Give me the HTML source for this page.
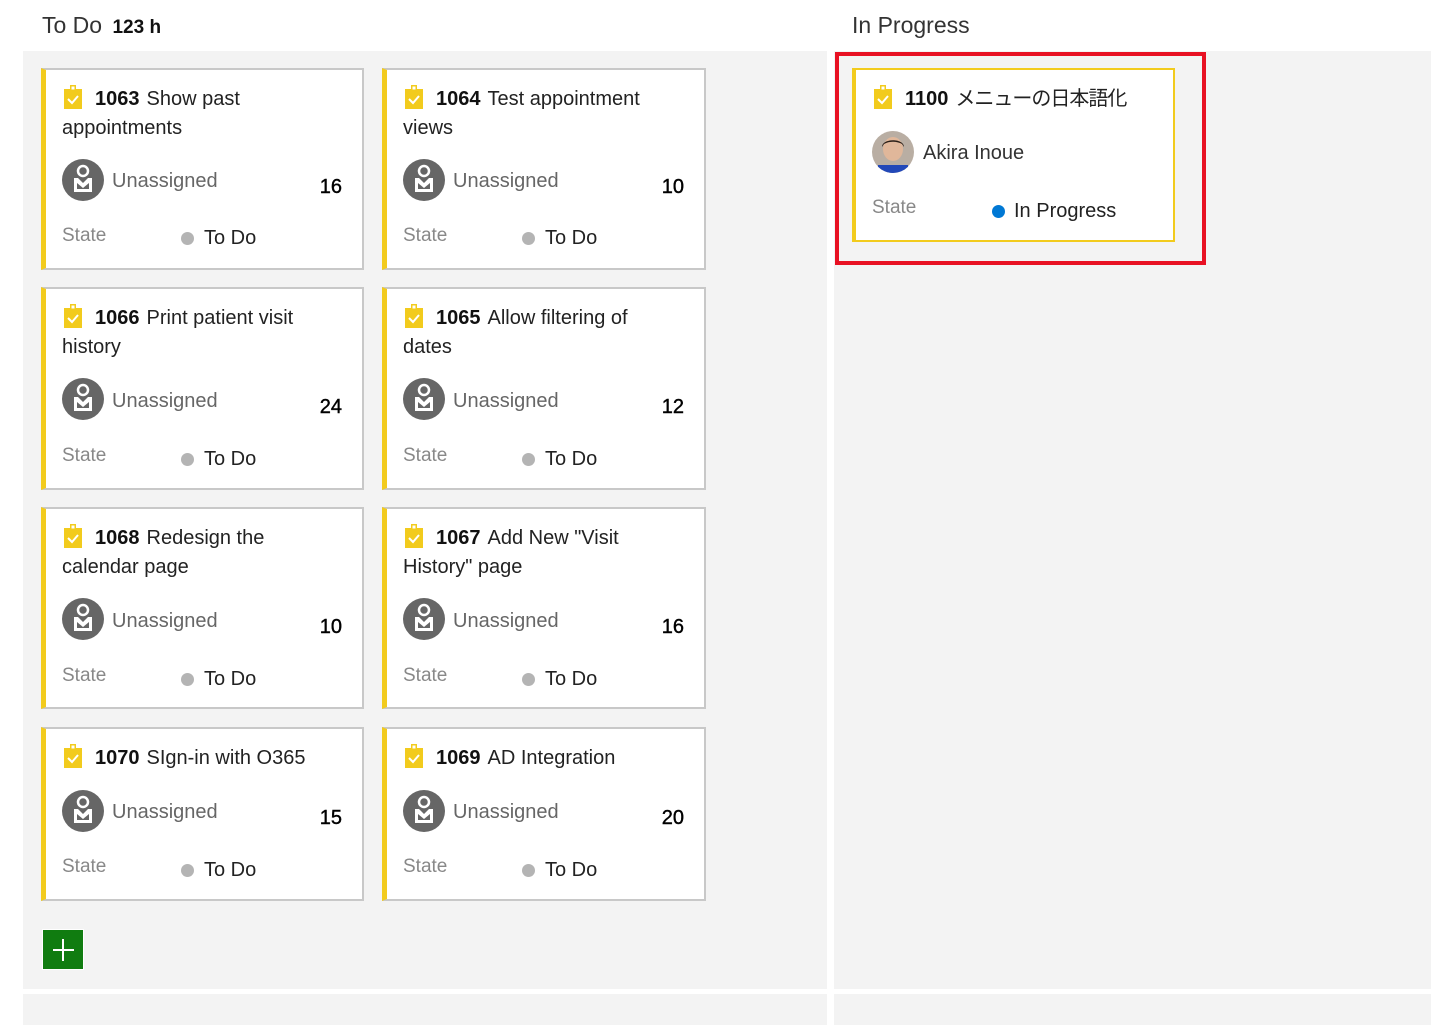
<!DOCTYPE html>
<html><head><meta charset="utf-8"><style>
body{margin:0;width:1431px;height:1025px;background:#fff;position:relative;overflow:hidden;font-family:"Segoe UI","Liberation Sans","Noto Sans CJK JP",sans-serif;}
.abs{position:absolute}
.col{position:absolute;background:#f3f3f3}
.card{position:absolute;background:#fff;border:2px solid #c8c8c8;border-left:5px solid #f2cb1d;box-sizing:border-box}
.t{position:absolute;left:16px;font-size:20px;color:#222;line-height:30px;white-space:nowrap}
.t b{font-weight:bold;margin-right:7px;color:#111}
.ic{position:absolute;left:18px;width:18px;height:24px}
.av{position:absolute;left:16px;width:42px;height:42px}
.un{position:absolute;left:66px;font-size:20px;color:#666;line-height:30px}
.num{position:absolute;right:20px;font-size:20px;color:#000;line-height:30px;-webkit-text-stroke:0.4px #000}
.st{position:absolute;left:16px;font-size:19px;color:#888;line-height:30px}
.dot{position:absolute;left:135px;width:13px;height:13px;border-radius:50%;background:#b4b4b4}
.sv{position:absolute;left:158px;font-size:20px;color:#222;line-height:30px}
</style></head><body>
<div class="abs" style="left:42px;top:8px;font-size:23px;color:#333;line-height:34px">To Do <b style="font-size:19px;color:#111;margin-left:4px">123 h</b></div>
<div class="abs" style="left:852px;top:8px;font-size:23px;color:#333;line-height:34px">In Progress</div>
<div class="col" style="left:23px;top:51px;width:804px;height:938px"></div>
<div class="col" style="left:834px;top:51px;width:597px;height:938px"></div>
<div class="col" style="left:23px;top:994px;width:804px;height:31px"></div>
<div class="col" style="left:834px;top:994px;width:597px;height:31px"></div>

<svg width="0" height="0" style="position:absolute">
<defs>
<symbol id="clip" viewBox="0 0 18 24"><rect x="0" y="4" width="18" height="20" fill="#f2cb1d"/><rect x="6" y="0" width="6" height="6" fill="#f2cb1d"/><rect x="7.5" y="1.5" width="3" height="3" fill="#fff"/><path d="M4 14l4 4 6-7" stroke="#fff" stroke-width="2" fill="none"/></symbol>
<symbol id="user" viewBox="0 0 42 42"><circle cx="21" cy="21" r="21" fill="#666"/><circle cx="21" cy="12" r="5" fill="none" stroke="#fff" stroke-width="2.5"/><path d="M12 19v14h18V19h-4l-5 5-5-5z" fill="#fff"/><path d="M15 24v6h12v-6l-6 5z" fill="#666"/></symbol>
</defs></svg>

<div class="card" style="left:41px;top:68px;width:323px;height:202px">
<svg class="ic" style="top:15px"><use href="#clip"/></svg>
<div class="t" style="top:14px"><span style="margin-left:33px"></span><b>1063</b>Show past</div>
<div class="t" style="top:43px">appointments</div>
<svg class="av" style="top:89px"><use href="#user"/></svg>
<div class="un" style="top:96px">Unassigned</div><div class="num" style="top:102px">16</div>
<div class="st" style="top:151px">State</div><div class="dot" style="top:162px"></div><div class="sv" style="top:153px">To Do</div>
</div>
<div class="card" style="left:382px;top:68px;width:324px;height:202px">
<svg class="ic" style="top:15px"><use href="#clip"/></svg>
<div class="t" style="top:14px"><span style="margin-left:33px"></span><b>1064</b>Test appointment</div>
<div class="t" style="top:43px">views</div>
<svg class="av" style="top:89px"><use href="#user"/></svg>
<div class="un" style="top:96px">Unassigned</div><div class="num" style="top:102px">10</div>
<div class="st" style="top:151px">State</div><div class="dot" style="top:162px"></div><div class="sv" style="top:153px">To Do</div>
</div>

<div class="card" style="left:41px;top:287px;width:323px;height:203px">
<svg class="ic" style="top:15px"><use href="#clip"/></svg>
<div class="t" style="top:14px"><span style="margin-left:33px"></span><b>1066</b>Print patient visit</div>
<div class="t" style="top:43px">history</div>
<svg class="av" style="top:89px"><use href="#user"/></svg>
<div class="un" style="top:97px">Unassigned</div><div class="num" style="top:103px">24</div>
<div class="st" style="top:152px">State</div><div class="dot" style="top:164px"></div><div class="sv" style="top:155px">To Do</div>
</div>
<div class="card" style="left:382px;top:287px;width:324px;height:203px">
<svg class="ic" style="top:15px"><use href="#clip"/></svg>
<div class="t" style="top:14px"><span style="margin-left:33px"></span><b>1065</b>Allow filtering of</div>
<div class="t" style="top:43px">dates</div>
<svg class="av" style="top:89px"><use href="#user"/></svg>
<div class="un" style="top:97px">Unassigned</div><div class="num" style="top:103px">12</div>
<div class="st" style="top:152px">State</div><div class="dot" style="top:164px"></div><div class="sv" style="top:155px">To Do</div>
</div>

<div class="card" style="left:41px;top:507px;width:323px;height:202px">
<svg class="ic" style="top:15px"><use href="#clip"/></svg>
<div class="t" style="top:14px"><span style="margin-left:33px"></span><b>1068</b>Redesign the</div>
<div class="t" style="top:43px">calendar page</div>
<svg class="av" style="top:89px"><use href="#user"/></svg>
<div class="un" style="top:97px">Unassigned</div><div class="num" style="top:103px">10</div>
<div class="st" style="top:152px">State</div><div class="dot" style="top:164px"></div><div class="sv" style="top:155px">To Do</div>
</div>
<div class="card" style="left:382px;top:507px;width:324px;height:202px">
<svg class="ic" style="top:15px"><use href="#clip"/></svg>
<div class="t" style="top:14px"><span style="margin-left:33px"></span><b>1067</b>Add New "Visit</div>
<div class="t" style="top:43px">History" page</div>
<svg class="av" style="top:89px"><use href="#user"/></svg>
<div class="un" style="top:97px">Unassigned</div><div class="num" style="top:103px">16</div>
<div class="st" style="top:152px">State</div><div class="dot" style="top:164px"></div><div class="sv" style="top:155px">To Do</div>
</div>

<div class="card" style="left:41px;top:727px;width:323px;height:174px">
<svg class="ic" style="top:15px"><use href="#clip"/></svg>
<div class="t" style="top:14px"><span style="margin-left:33px"></span><b>1070</b>SIgn-in with O365</div>
<svg class="av" style="top:61px"><use href="#user"/></svg>
<div class="un" style="top:68px">Unassigned</div><div class="num" style="top:74px">15</div>
<div class="st" style="top:123px">State</div><div class="dot" style="top:135px"></div><div class="sv" style="top:126px">To Do</div>
</div>
<div class="card" style="left:382px;top:727px;width:324px;height:174px">
<svg class="ic" style="top:15px"><use href="#clip"/></svg>
<div class="t" style="top:14px"><span style="margin-left:33px"></span><b>1069</b>AD Integration</div>
<svg class="av" style="top:61px"><use href="#user"/></svg>
<div class="un" style="top:68px">Unassigned</div><div class="num" style="top:74px">20</div>
<div class="st" style="top:123px">State</div><div class="dot" style="top:135px"></div><div class="sv" style="top:126px">To Do</div>
</div>

<div class="abs" style="left:42px;top:929px;width:42px;height:41px;background:#107c10;border:1px solid #fff;box-sizing:border-box"></div>
<div class="abs" style="left:53px;top:949px;width:21px;height:2px;background:#fff"></div>
<div class="abs" style="left:62px;top:939px;width:2px;height:22px;background:#fff"></div>

<div class="abs" style="left:835px;top:52px;width:371px;height:213px;border:4px solid #e81123;box-sizing:border-box"></div>
<div class="card" style="left:852px;top:68px;width:323px;height:174px;border:2px solid #f2cb1d;border-left:4px solid #f2cb1d">
<svg class="ic" style="top:15px;left:18px"><use href="#clip"/></svg>
<div class="t" style="top:14px"><span style="margin-left:33px"></span><b>1100</b><span style="letter-spacing:-1px">メニューの日本語化</span></div>
<svg class="av" style="top:61px;left:16px" viewBox="0 0 42 42"><defs><clipPath id="cc"><circle cx="21" cy="21" r="21"/></clipPath></defs><g clip-path="url(#cc)"><rect width="42" height="42" fill="#b9aea3"/><ellipse cx="21" cy="18" rx="10" ry="12" fill="#e0b79a"/><path d="M10 16c0-9 22-9 22 0l-2-3c-5-3-13-3-18 0z" fill="#2a1f18"/><rect x="6" y="34" width="30" height="10" fill="#2248b8"/></g></svg>
<div class="un" style="top:68px;left:67px;color:#333">Akira Inoue</div>
<div class="st" style="top:123px">State</div><div class="dot" style="top:135px;left:136px;background:#0078d4"></div><div class="sv" style="top:126px">In Progress</div>
</div>
</body></html>
